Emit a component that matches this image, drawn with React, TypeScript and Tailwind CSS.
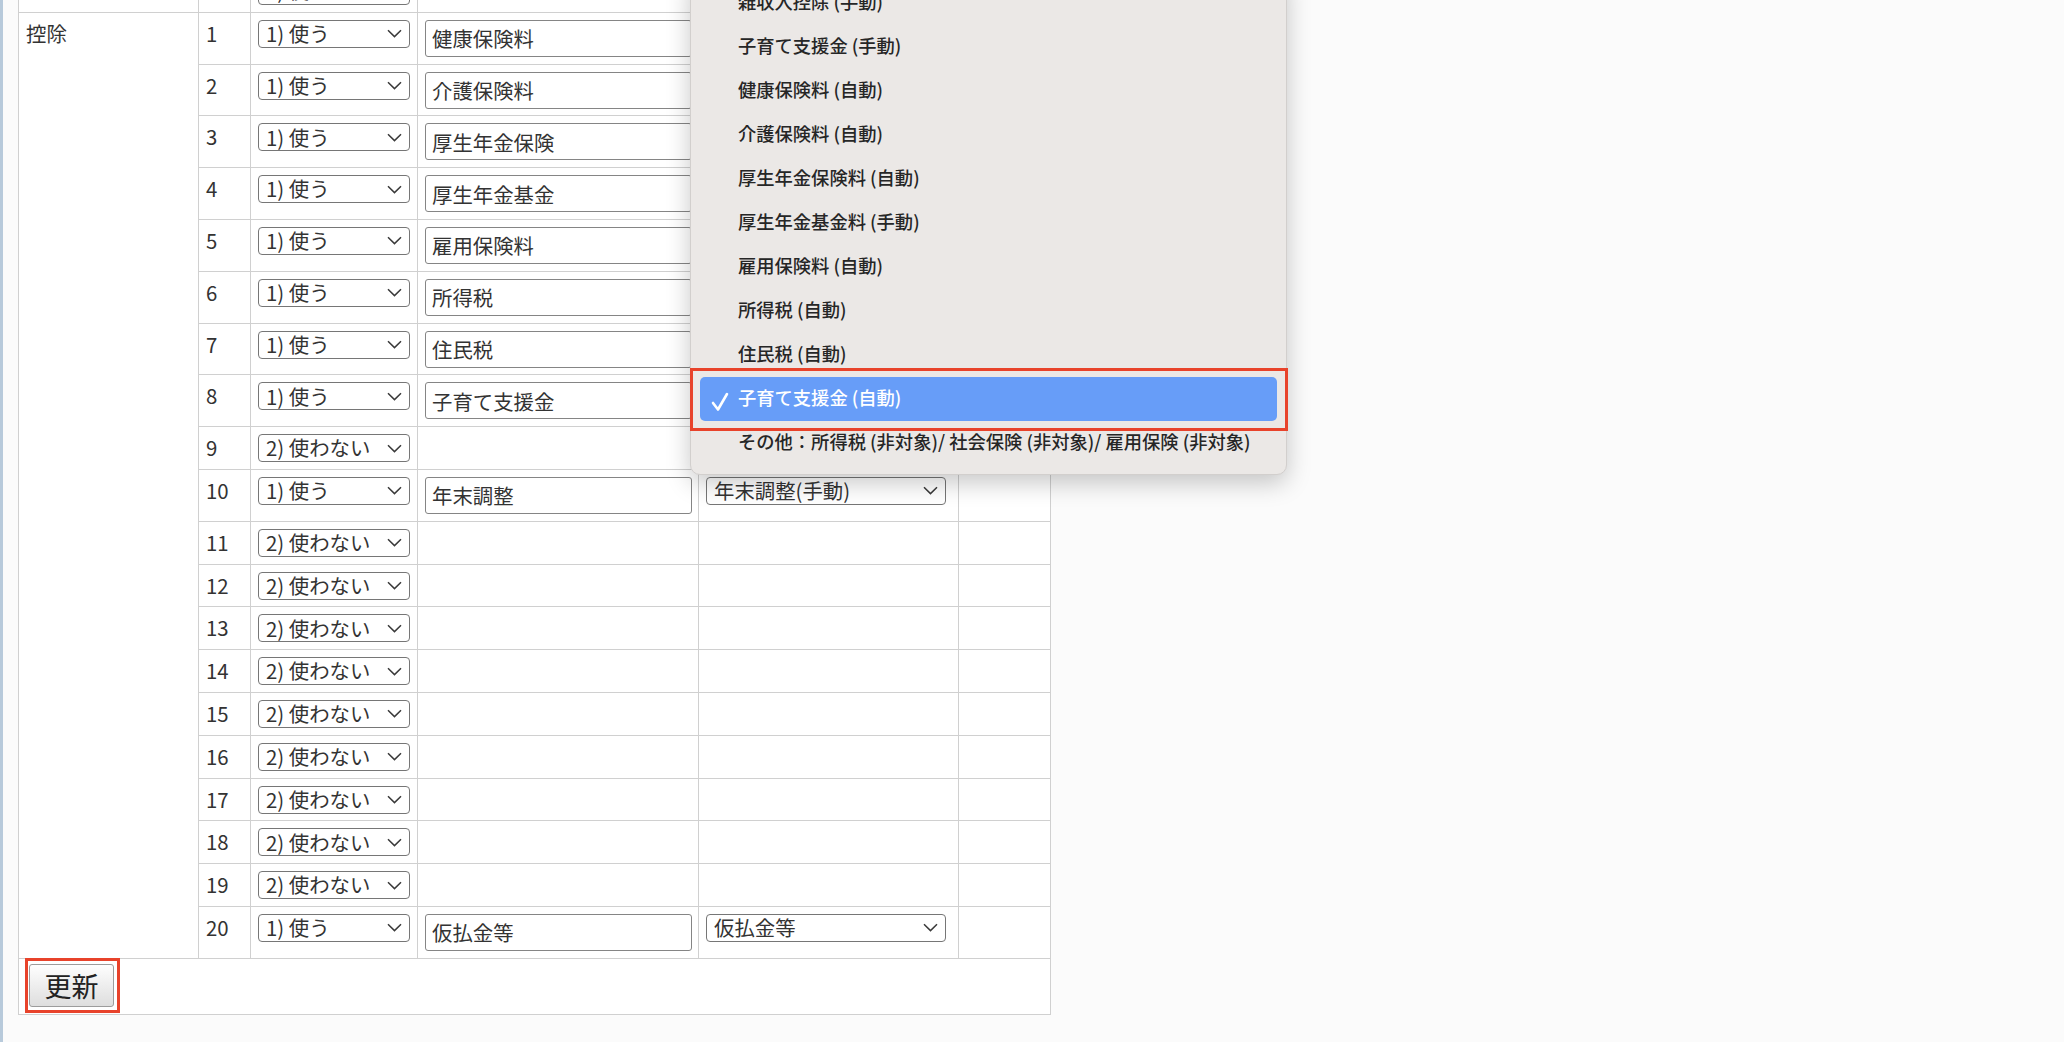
import React from "react";

type Row = {
  no: number;
  use: boolean;
  name?: string;
  kind?: string;
};

const rows: Row[] = [
  { no: 1, use: true, name: "健康保険料", kind: "健康保険料(自動)" },
  { no: 2, use: true, name: "介護保険料", kind: "介護保険料(自動)" },
  { no: 3, use: true, name: "厚生年金保険", kind: "厚生年金保険料(自動)" },
  { no: 4, use: true, name: "厚生年金基金", kind: "厚生年金基金料(手動)" },
  { no: 5, use: true, name: "雇用保険料", kind: "雇用保険料(自動)" },
  { no: 6, use: true, name: "所得税", kind: "所得税(自動)" },
  { no: 7, use: true, name: "住民税", kind: "住民税(自動)" },
  { no: 8, use: true, name: "子育て支援金", kind: "子育て支援金(自動)" },
  { no: 9, use: false },
  { no: 10, use: true, name: "年末調整", kind: "年末調整(手動)" },
  { no: 11, use: false },
  { no: 12, use: false },
  { no: 13, use: false },
  { no: 14, use: false },
  { no: 15, use: false },
  { no: 16, use: false },
  { no: 17, use: false },
  { no: 18, use: false },
  { no: 19, use: false },
  { no: 20, use: true, name: "仮払金等", kind: "仮払金等" },
];

const menuItems = [
  "雑収入控除 (手動)",
  "子育て支援金 (手動)",
  "健康保険料 (自動)",
  "介護保険料 (自動)",
  "厚生年金保険料 (自動)",
  "厚生年金基金料 (手動)",
  "雇用保険料 (自動)",
  "所得税 (自動)",
  "住民税 (自動)",
  "子育て支援金 (自動)",
  "その他：所得税 (非対象)/ 社会保険 (非対象)/ 雇用保険 (非対象)",
];

function Chevron() {
  return (
    <svg width="15" height="9" viewBox="0 0 15 9" className="shrink-0">
      <path d="M1 1.2 L7.5 7.6 L14 1.2" fill="none" stroke="#3a3a3a" strokeWidth="1.5" />
    </svg>
  );
}

function FakeSelect({ label, width }: { label: string; width: string }) {
  return (
    <div
      className={`flex h-[28px] ${width} items-center justify-between rounded-[4px] border border-[#767676] bg-white pl-[7px] pr-[7px] text-[20.4px] leading-none text-[#333]`}
    >
      <span className="-mt-[1px] whitespace-nowrap">{label}</span>
      <Chevron />
    </div>
  );
}

const cell = "border border-[#d0d0d0] px-[7px] pt-[7px] pb-[6.8px] align-top";

export default function App() {
  return (
    <div className="relative flex h-[1042px] overflow-hidden bg-[#fbfbfb] font-['Noto_Sans_CJK_JP',sans-serif] text-[#333]">
      <div className="w-[3px] shrink-0 bg-[#b8cadb]" />

      <div className="flex-1">
        <table className="ml-[15px] mt-[-31px] w-[1032px] table-fixed border-collapse bg-white">
          <colgroup>
            <col className="w-[180px]" />
            <col className="w-[52px]" />
            <col className="w-[167px]" />
            <col className="w-[281px]" />
            <col className="w-[260px]" />
            <col className="w-[92px]" />
          </colgroup>
          <tbody>
            {/* last row of the previous block, scrolled mostly out of view */}
            <tr>
              <td className={cell} />
              <td className={`${cell} text-[20.4px] leading-[28px]`}>20</td>
              <td className={cell}>
                <FakeSelect label="2) 使わない" width="w-[152px]" />
              </td>
              <td className={cell} />
              <td className={cell} />
              <td className={cell} />
            </tr>

            {rows.map((row, i) => (
              <tr key={row.no}>
                {i === 0 && (
                  <td rowSpan={rows.length} className={`${cell} text-[20.4px] leading-[26px]`}>
                    控除
                  </td>
                )}
                <td className={`${cell} text-[20.4px] leading-[27px]`}>{row.no}</td>
                <td className={cell}>
                  <FakeSelect label={row.use ? "1) 使う" : "2) 使わない"} width="w-[152px]" />
                </td>
                <td className={cell}>
                  {row.use && (
                    <input
                      readOnly
                      defaultValue={row.name}
                      className="block h-[37px] w-[267px] rounded-[3px] border border-[#858585] bg-white px-[6px] text-[20.4px] text-[#333] outline-none"
                    />
                  )}
                </td>
                <td className={cell}>
                  {row.use && row.kind && <FakeSelect label={row.kind} width="w-[240px]" />}
                </td>
                <td className={cell} />
              </tr>
            ))}

            <tr>
              <td colSpan={6} className="border border-[#d0d0d0] pl-[10px] pt-[5px] pb-[7px]">
                <span className="relative inline-block">
                  <button className="flex h-[43px] w-[85px] items-center justify-center rounded-[3px] border border-[#9c9c9c] bg-gradient-to-b from-[#fefefe] to-[#dedede] text-[27px] leading-none text-[#222]">
                    更新
                  </button>
                  <span className="absolute -bottom-[6px] -left-[4px] -right-[6px] -top-[6px] border-[3px] border-[#e8432b]" />
                </span>
              </td>
            </tr>
          </tbody>
        </table>
      </div>

      {/* open select popup */}
      <div className="absolute left-[690px] top-[-29px] w-[597px] rounded-[10px] border border-[#d2cfcd] bg-[#ebe8e6] py-[9px] shadow-[0_8px_24px_rgba(0,0,0,0.22)]">
        {menuItems.map((item) =>
          item === "子育て支援金 (自動)" ? (
            <div
              key={item}
              className="mx-[9px] flex h-[44px] items-center rounded-[5px] bg-[#679df8] pb-[3px] text-[18.3px] font-medium text-white"
            >
              <svg width="18" height="20" viewBox="0 0 18 20" className="ml-[11px] mr-[9px] mt-[8px] shrink-0">
                <path d="M2 11 L7 17.5 L16 2" fill="none" stroke="#fff" strokeWidth="2.6" strokeLinecap="round" strokeLinejoin="round" />
              </svg>
              <span className="whitespace-nowrap">{item}</span>
            </div>
          ) : (
            <div
              key={item}
              className="flex h-[44px] items-center whitespace-nowrap pb-[3px] pl-[47px] text-[18.3px] font-medium text-[#262626]"
            >
              {item}
            </div>
          )
        )}
      </div>

      {/* annotation around the selected option */}
      <div className="absolute left-[690px] top-[368px] h-[63px] w-[598px] border-[3px] border-[#e8432b]" />
    </div>
  );
}
